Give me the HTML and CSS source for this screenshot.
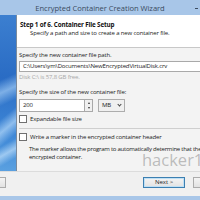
FILE: index.html
```html
<!DOCTYPE html>
<html>
<head>
<meta charset="utf-8">
<link rel="stylesheet" href="styles.css">
</head>
<body>
<div class="window">
  <div class="titlebar">
    <span class="title">Encrypted Container Creation Wizard</span>
    <span class="minbtn"></span>
  </div>
  <div class="main">
    <div class="sideimg"></div>
    <div class="panel">
      <div class="header">
        <div class="step">Step 1 of 6. Container File Setup</div>
        <div class="sub">Specify a path and size to create a new container file.</div>
      </div>
      <div class="content">
        <div class="label">Specify the new container file path.</div>
        <div class="input path">C:\Users\ym\Documents\NewEncryptedVirtualDisk.crv</div>
        <div class="hint">Disk C:\ is 57,8 GB free.</div>
        <div class="label l2">Specify the size of the new container file:</div>
        <div class="sizerow">
          <div class="input size">200</div>
          <div class="spin"><span class="up"></span><span class="down"></span></div>
          <div class="select">MB<span class="chev"></span></div>
        </div>
        <div class="check c1"><span class="box"></span>Expandable file size</div>
        <div class="sep"></div>
        <div class="check c2"><span class="box"></span>Write a marker in the encrypted container header</div>
        <div class="desc">The marker allows the program to automatically determine that the<br>encrypted container.</div>
        <div class="watermark">hacker10</div>
      </div>
    </div>
  </div>
  <div class="footer">
    <div class="btn back"></div>
    <div class="spacer"></div>
    <div class="btn next">Next &gt;</div>
    <div class="btn cancel"></div>
  </div>
  <div class="bottomframe"></div>
</div>
</body>
</html>
```
FILE: styles.css
```css
html, body {
  margin: 0;
  padding: 0;
}
body {
  width: 200px;
  height: 200px;
  overflow: hidden;
  background: #aac8e9;
  font-family: "Open Sans", "Noto Sans", sans-serif;
}
.window {
  width: 200px;
  height: 200px;
  display: flex;
  flex-direction: column;
}
.titlebar {
  height: 15px;
  flex: none;
  background: #a8c6e8;
  position: relative;
  display: flex;
  align-items: center;
  justify-content: center;
}
.title {
  font-size: 7.6px;
  color: #3b4c61;
  letter-spacing: -0.05px;
  margin-top: 1px;
}
.minbtn {
  position: absolute;
  right: 2px;
  top: 8px;
  width: 3px;
  height: 1px;
  background: #3b4c61;
}
.main {
  height: 156px;
  flex: none;
  display: flex;
}
.sideimg {
  width: 16px;
  flex: none;
  background:
    linear-gradient(155deg, transparent 40%, rgba(190,225,255,0.55) 48%, transparent 56%),
    linear-gradient(140deg, transparent 62%, rgba(200,230,255,0.6) 70%, transparent 78%),
    linear-gradient(150deg, transparent 80%, rgba(210,235,255,0.6) 86%, transparent 92%),
    linear-gradient(180deg, #3c7fd0 0%, #2a6cc4 40%, #3d86d6 75%, #5aa0e0 100%);
}
.panel {
  flex: 1;
  display: flex;
  flex-direction: column;
  border-left: 1px solid #7a8a9c;
  min-width: 0;
}
.header {
  height: 33px;
  flex: none;
  background: #ffffff;
  border-bottom: 1px solid #c8c8c8;
  box-sizing: border-box;
  padding: 6px 0 0 3px;
}
.step {
  font-size: 6.3px;
  font-weight: bold;
  color: #111;
  line-height: 8px;
  letter-spacing: -0.15px;
}
.sub {
  font-size: 6px;
  color: #222;
  line-height: 8px;
  padding-left: 10px;
  letter-spacing: -0.15px;
  white-space: nowrap;
}
.content {
  flex: 1;
  background: #f3f3f3;
  position: relative;
  padding: 3px 0 0 2px;
  font-size: 6px;
  color: #222;
  letter-spacing: -0.15px;
  white-space: nowrap;
  overflow: hidden;
}
.label {
  line-height: 8px;
  height: 8px;
}
.input {
  background: #fff;
  border: 1px solid #a9a9a9;
  box-sizing: border-box;
  line-height: 9px;
  padding-left: 3px;
}
.path {
  margin-top: 2px;
  height: 11px;
  width: 200px;
}
.hint {
  color: #a8a8a8;
  line-height: 8px;
  margin-top: 1px;
}
.l2 {
  margin-top: 7px;
}
.sizerow {
  display: flex;
  margin-top: 3px;
  height: 13px;
}
.size {
  width: 66px;
  height: 13px;
  line-height: 11px;
}
.spin {
  width: 8px;
  height: 13px;
  display: flex;
  flex-direction: column;
  justify-content: space-around;
  align-items: center;
  background: #f0f0f0;
  border: 1px solid #a9a9a9;
  border-left: none;
  box-sizing: border-box;
}
.up, .down {
  width: 0;
  height: 0;
  border-left: 1.5px solid transparent;
  border-right: 1.5px solid transparent;
}
.up { border-bottom: 2px solid #333; }
.down { border-top: 2px solid #333; }
.select {
  margin-left: 5px;
  width: 27px;
  height: 13px;
  background: #f0f0f0;
  border: 1px solid #adadad;
  box-sizing: border-box;
  line-height: 11px;
  padding-left: 3px;
  position: relative;
}
.chev {
  position: absolute;
  right: 3px;
  top: 3px;
  width: 2px;
  height: 2px;
  border-right: 1px solid #444;
  border-bottom: 1px solid #444;
  transform: rotate(45deg);
}
.check {
  display: flex;
  align-items: center;
  line-height: 8px;
}
.c1 { margin-top: 3px; }
.c2 { margin-top: 4px; }
.box {
  width: 6px;
  height: 6px;
  border: 1px solid #707070;
  background: #fff;
  margin-right: 3px;
  flex: none;
}
.sep {
  margin-top: 5px;
  height: 1px;
  background: #cfcfcf;
  width: 200px;
}
.desc {
  margin-top: 5px;
  padding-left: 10px;
  line-height: 7.5px;
  letter-spacing: -0.25px;
}
.watermark {
  position: absolute;
  left: 125px;
  top: 100px;
  font-size: 16.5px;
  color: rgba(140,140,140,0.55);
  font-family: "Open Sans", sans-serif;
  letter-spacing: 0;
}
.footer {
  height: 25px;
  flex: none;
  background: #f0f0f0;
  display: flex;
  align-items: flex-start;
  padding-top: 5px;
  box-sizing: border-box;
  border-top: 1px solid #dcdcdc;
}
.btn {
  height: 11px;
  box-sizing: border-box;
  background: linear-gradient(#f4f4f4, #e2e2e2);
  border: 1px solid #acacac;
  font-size: 6px;
  line-height: 9px;
  text-align: center;
  color: #222;
  flex: none;
}
.back {
  width: 8px;
  margin-left: -2px;
}
.spacer { flex: 1; }
.next {
  width: 42px;
  border-color: #3c7fb1;
  box-shadow: inset 0 0 0 1px #bfe0f5;
}
.cancel {
  width: 20px;
  margin-left: 8px;
  margin-right: -13px;
}
.bottomframe {
  flex: 1;
  background: #a8c6e8;
}
```
